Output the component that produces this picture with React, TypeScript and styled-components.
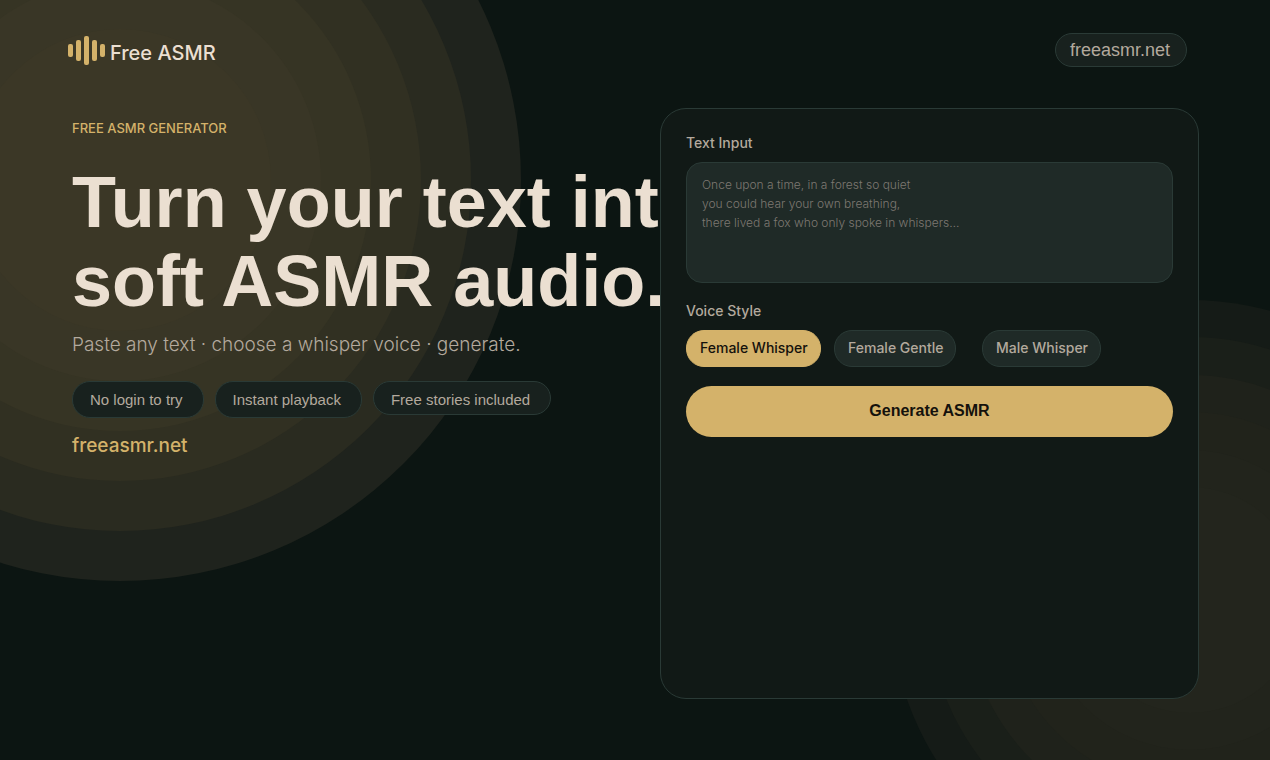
import React from "react";
import styled, { createGlobalStyle, css } from "styled-components";

const color = {
  bg: "#0c1512",
  panel: "#111916",
  chip: "#18211e",
  field: "#1f2a27",
  line: "#2a3a36",
  gold: "#d4b26a",
  cream: "#ebdfd1",
  muted: "#b3a99d",
  faint: "#7d7871",
  ink: "#14110c",
};

const display = `"Liberation Sans", Arial, Helvetica, sans-serif`;
const text = `Inter, "Liberation Sans", Helvetica, sans-serif`;

const GlobalStyle = createGlobalStyle`
  *, *::before, *::after { box-sizing: border-box; }
  body {
    margin: 0;
    background: ${color.bg};
    color: ${color.cream};
    font-family: ${text};
  }
  h1, p, ul { margin: 0; padding: 0; }
  button, textarea { font-family: inherit; }
`;

const Page = styled.div`
  position: relative;
  min-height: 100vh;
  overflow: hidden;
`;

const Backdrop = styled.svg`
  position: absolute;
  top: 0;
  width: 600px;
  height: 100%;
  pointer-events: none;
`;

const LeftBackdrop = styled(Backdrop)`
  left: 0;
`;

const RightBackdrop = styled(Backdrop)`
  right: 0;
`;

const Header = styled.header`
  position: relative;
  display: flex;
  justify-content: space-between;
  align-items: flex-start;
  padding: 33px 83px 0 68px;
`;

const Brand = styled.a`
  display: flex;
  align-items: center;
  gap: 5px;
  padding-top: 3px;
  color: ${color.cream};
  font-size: 20px;
  font-weight: 500;
  line-height: 24px;
  text-decoration: none;

  span {
    padding-top: 4px;
  }
`;

const pill = css`
  border: 1px solid ${color.line};
  border-radius: 18px;
  background: ${color.chip};
  color: ${color.muted};
`;

const SitePill = styled.a`
  ${pill}
  padding: 0 16px 0 14px;
  font-family: ${display};
  font-size: 18px;
  line-height: 32px;
  text-decoration: none;
`;

const Main = styled.main`
  position: relative;
  display: grid;
  grid-template-columns: minmax(0, 588fr) minmax(0, 539fr);
  padding: 41px 71px 61px 72px;
`;

const Intro = styled.section`
  padding-top: 12px;
`;

const Eyebrow = styled.p`
  color: ${color.gold};
  font-size: 13px;
  font-weight: 500;
  line-height: 16px;
  text-transform: uppercase;
`;

const Headline = styled.h1`
  margin-top: 27px;
  font-family: ${display};
  font-size: 72px;
  line-height: 79px;
  font-weight: 700;
  white-space: nowrap;
`;

const Lead = styled.p`
  margin-top: 12px;
  color: ${color.muted};
  font-size: 19px;
  font-weight: 300;
  line-height: 24px;
`;

const Perks = styled.ul`
  display: flex;
  align-items: flex-start;
  gap: 11px;
  margin-top: 24px;
  list-style: none;
`;

const Perk = styled.li<{ $compact?: boolean }>`
  ${pill}
  height: ${(p) => (p.$compact ? 34 : 37)}px;
  padding: 0 20px 0 17px;
  font-family: ${display};
  font-size: 15px;
  line-height: 36px;
  white-space: nowrap;
`;

const SiteLink = styled.a`
  display: inline-block;
  margin-top: 16px;
  color: ${color.gold};
  font-size: 19px;
  font-weight: 500;
  line-height: 24px;
  text-decoration: none;
`;

const Panel = styled.form`
  min-height: 591px;
  padding: 25px;
  border: 1px solid ${color.line};
  border-radius: 26px;
  background: ${color.panel};
`;

const FieldLabel = styled.label`
  display: block;
  color: ${color.muted};
  font-size: 14px;
  font-weight: 500;
  line-height: 18px;
`;

const TextField = styled.textarea`
  display: block;
  width: 100%;
  height: 121px;
  margin: 10px 0 19px;
  padding: 12px 15px;
  border: 1px solid ${color.line};
  border-radius: 16px;
  outline: none;
  background: ${color.field};
  color: ${color.muted};
  font-size: 12px;
  font-weight: 300;
  line-height: 19px;
  resize: none;

  &::placeholder {
    color: ${color.faint};
    opacity: 1;
  }
`;

const Voices = styled.div`
  display: grid;
  grid-template-columns: repeat(3, 148px);
  justify-items: start;
  margin: 10px 0 19px;
`;

const Voice = styled.button<{ $active?: boolean }>`
  ${pill}
  height: 37px;
  padding: 0 12px 2px 13px;
  border-color: ${(p) => (p.$active ? color.gold : color.line)};
  background: ${(p) => (p.$active ? color.gold : color.field)};
  color: ${(p) => (p.$active ? color.ink : color.muted)};
  font-size: 14px;
  font-weight: 500;
  white-space: nowrap;
`;

const Generate = styled.button`
  width: 100%;
  height: 51px;
  padding: 0 0 2px;
  border: 0;
  border-radius: 26px;
  background: ${color.gold};
  color: ${color.ink};
  font-family: ${display};
  font-size: 16px;
  font-weight: 700;
`;

const leftRings = [
  [401, "#1f231d"],
  [351, "#2a2b20"],
  [301, "#313022"],
  [251, "#363424"],
  [201, "#393626"],
  [151, "#3b3726"],
] as const;

const rightRings = [
  [300, "#151b17"],
  [263, "#1a1f19"],
  [225, "#1f221b"],
  [188, "#21231b"],
  [150, "#22241c"],
  [113, "#23251d"],
] as const;

const LogoMark = () => (
  <svg width="37" height="29" viewBox="0 0 37 29" fill={color.gold} aria-hidden="true">
    <rect x="0" y="8" width="5" height="13" rx="2" />
    <rect x="8" y="4" width="5" height="21" rx="2" />
    <rect x="16" y="0" width="5" height="29" rx="2" />
    <rect x="24" y="4" width="5" height="21" rx="2" />
    <rect x="32" y="8" width="5" height="13" rx="2" />
  </svg>
);

const voices = ["Female Whisper", "Female Gentle", "Male Whisper"];

const placeholder = [
  "Once upon a time, in a forest so quiet",
  "you could hear your own breathing,",
  "there lived a fox who only spoke in whispers…",
].join("\n");

export default function App() {
  const [voice, setVoice] = React.useState(voices[0]);

  return (
    <Page>
      <GlobalStyle />
      <LeftBackdrop aria-hidden="true">
        {leftRings.map(([r, fill]) => (
          <circle key={r} cx="120" cy="180" r={r} fill={fill} />
        ))}
      </LeftBackdrop>
      <RightBackdrop aria-hidden="true">
        {rightRings.map(([r, fill]) => (
          <circle key={r} cx="520" cy="600" r={r} fill={fill} />
        ))}
      </RightBackdrop>

      <Header>
        <Brand href="#">
          <LogoMark />
          <span>Free ASMR</span>
        </Brand>
        <SitePill href="#">freeasmr.net</SitePill>
      </Header>

      <Main>
        <Intro>
          <Eyebrow>Free ASMR Generator</Eyebrow>
          <Headline>
            Turn your text into
            <br />
            soft ASMR audio.
          </Headline>
          <Lead>Paste any text · choose a whisper voice · generate.</Lead>
          <Perks>
            <Perk>No login to try</Perk>
            <Perk>Instant playback</Perk>
            <Perk $compact>Free stories included</Perk>
          </Perks>
          <SiteLink href="#">freeasmr.net</SiteLink>
        </Intro>

        <Panel onSubmit={(e) => e.preventDefault()}>
          <FieldLabel htmlFor="story">Text Input</FieldLabel>
          <TextField id="story" placeholder={placeholder} />
          <FieldLabel as="div" id="voice-label">
            Voice Style
          </FieldLabel>
          <Voices role="group" aria-labelledby="voice-label">
            {voices.map((name) => (
              <Voice
                key={name}
                type="button"
                $active={name === voice}
                aria-pressed={name === voice}
                onClick={() => setVoice(name)}
              >
                {name}
              </Voice>
            ))}
          </Voices>
          <Generate type="submit">Generate ASMR</Generate>
        </Panel>
      </Main>
    </Page>
  );
}
